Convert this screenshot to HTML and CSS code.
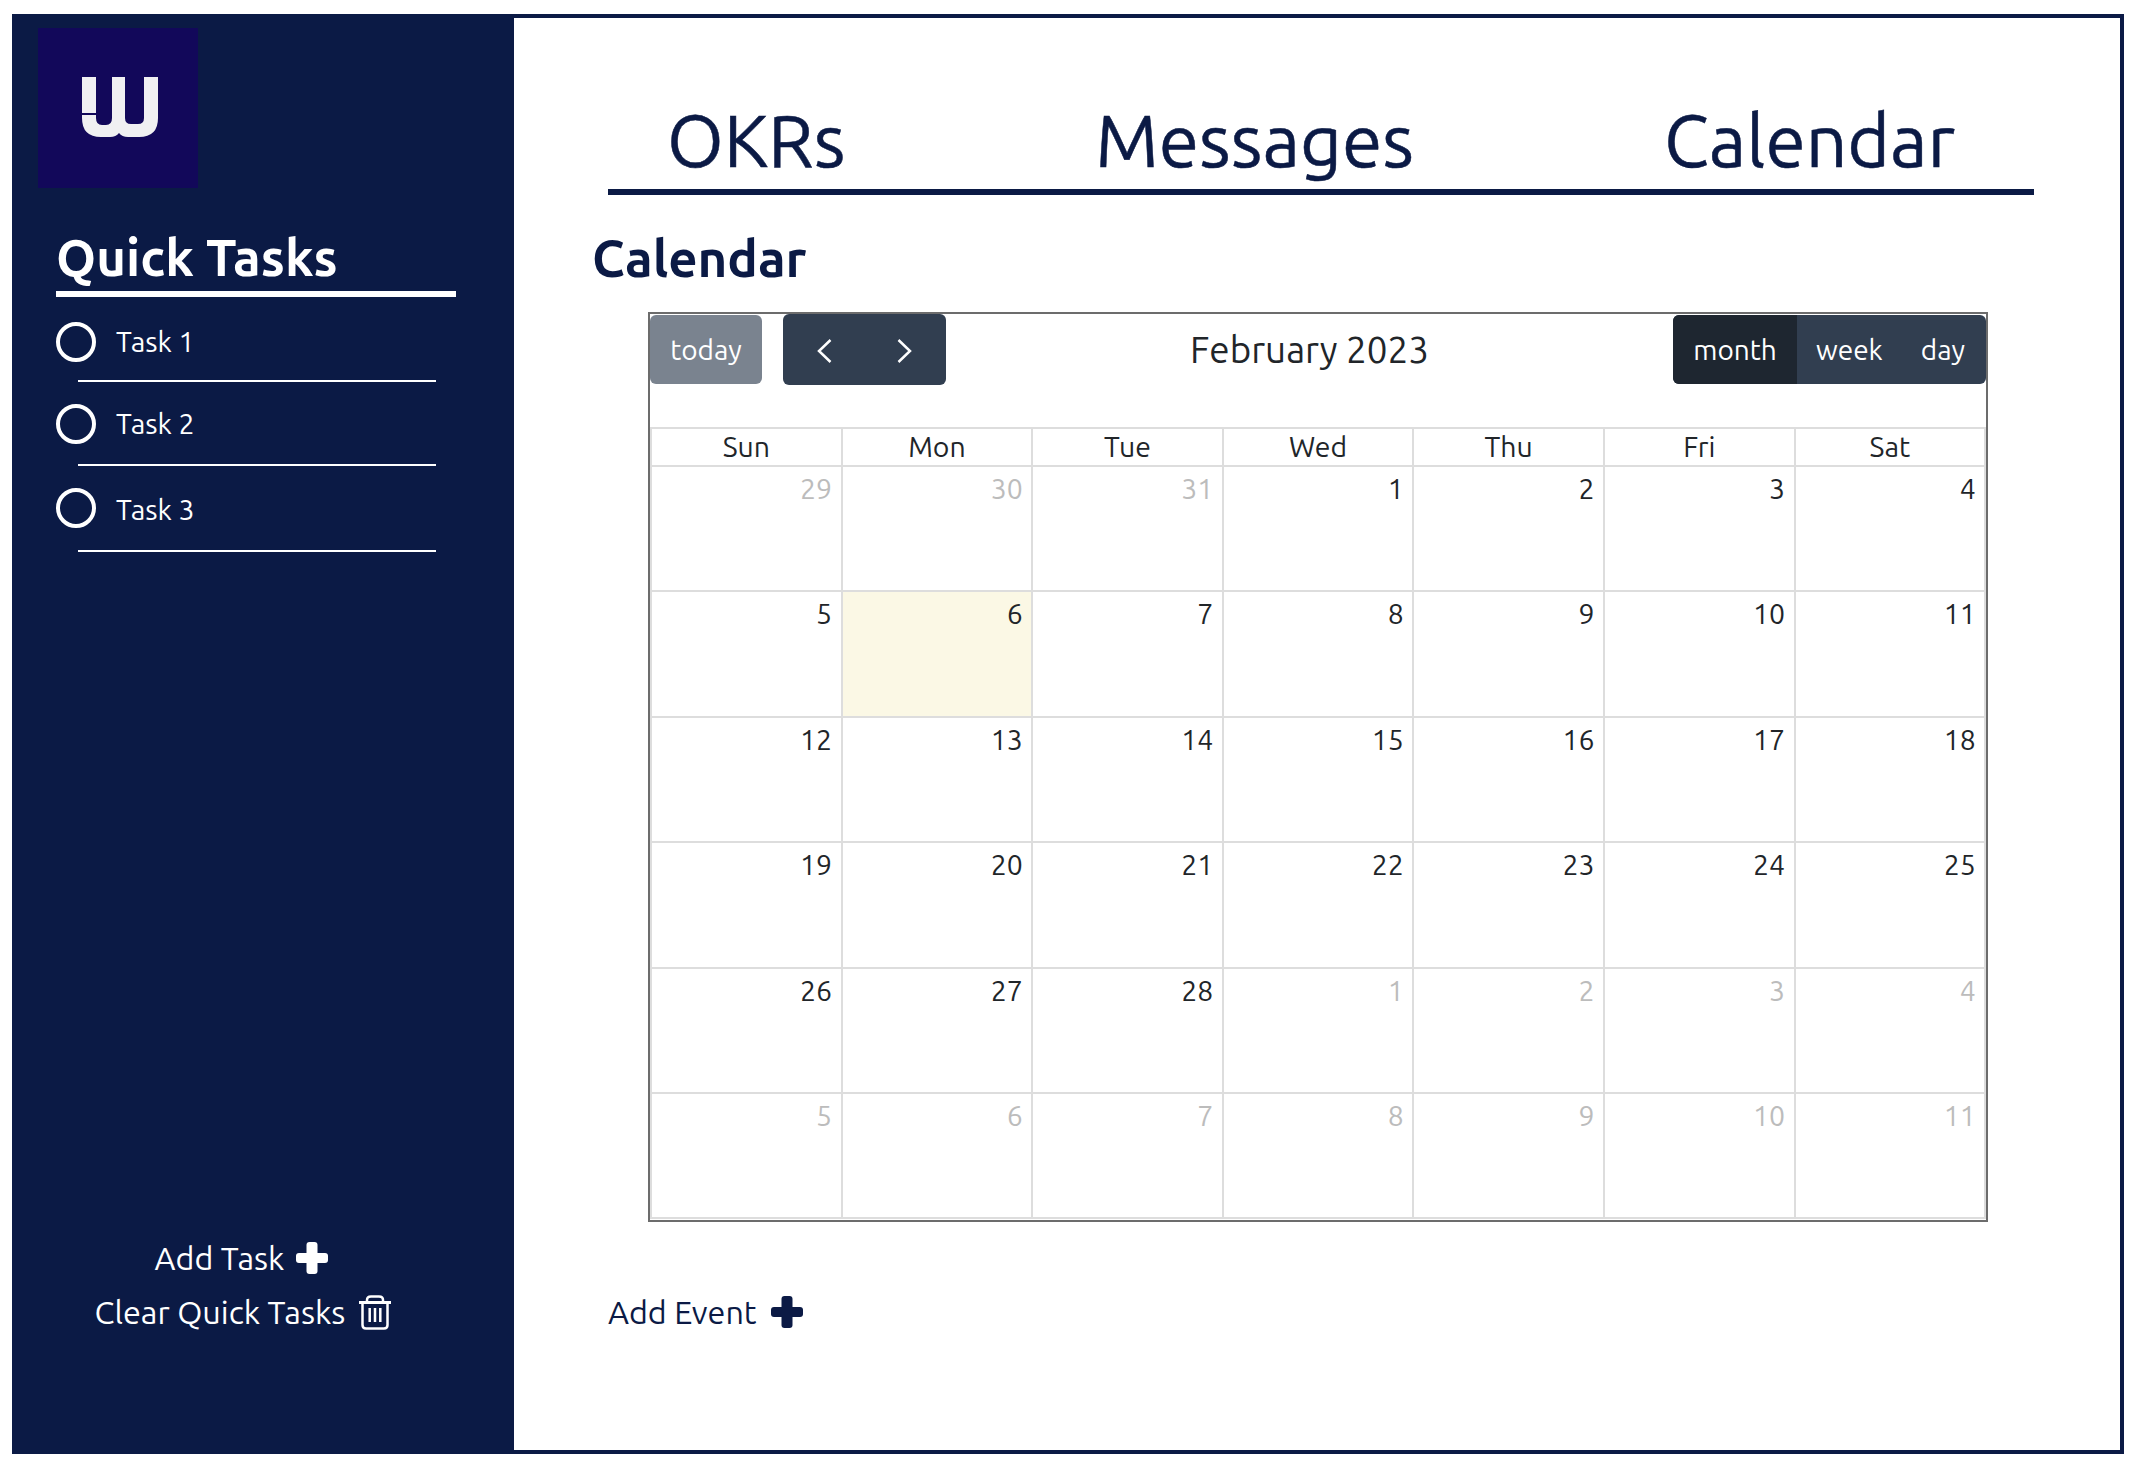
FILE: index.html
```html
<!DOCTYPE html>
<html lang="en">
<head>
    <meta charset="UTF-8">
    <title>Calendar</title>
    <link rel="stylesheet" href="styles.css">
</head>
<body>
<div class="frame">
    <aside class="sidebar">
        <div class="logo">
            <svg width="76" height="62" viewBox="0 0 76 62" fill="#f0f0f2">
                <path d="M0 1H14V37H0Z"/>
                <path d="M0 39H14V42Q14 49 20 49H24Q30 49 30 42V1H43V42Q43 48 49 48H56Q62 48 62 42V1H76V42Q76 61 57 61H46Q40 61 37 57Q34 61 28 61H19Q0 61 0 42Z"/>
            </svg>
        </div>
        <h2 class="quick-title">Quick Tasks</h2>
        <ul class="task-list">
            <li class="task">
                <div class="task-row"><span class="task-circle"></span><span class="task-name">Task 1</span></div>
                <div class="task-line"></div>
            </li>
            <li class="task">
                <div class="task-row"><span class="task-circle"></span><span class="task-name">Task 2</span></div>
                <div class="task-line"></div>
            </li>
            <li class="task">
                <div class="task-row"><span class="task-circle"></span><span class="task-name">Task 3</span></div>
                <div class="task-line"></div>
            </li>
        </ul>
        <div class="side-actions">
            <a class="action add-task">Add Task
                <svg class="plus" viewBox="0 0 32 32" fill="currentColor"><rect x="10.500" width="11" height="32" rx="3"/><rect y="11" width="32" height="10" rx="3"/></svg>
            </a>
            <a class="action clear-tasks">Clear Quick Tasks
                <svg class="trash" viewBox="0 0 32 35" fill="none" stroke="currentColor" stroke-width="2.500">
                    <path d="M8 7V5Q8 1.500 12 1.500H20Q24 1.500 24 5V7"/>
                    <path d="M0 7.500H32" stroke-width="3"/>
                    <path d="M3.500 8V30Q3.500 33.500 7 33.500H25Q28.500 33.500 28.500 30V8"/>
                    <path d="M10.700 13V27M16 13V27M21.300 13V27"/>
                </svg>
            </a>
        </div>
    </aside>

    <main class="content">
        <nav class="tabs">
            <a>OKRs</a>
            <a>Messages</a>
            <a>Calendar</a>
        </nav>
        <h2 class="page-title">Calendar</h2>

        <div class="calendar">
            <div class="toolbar">
                <div class="toolbar-left">
                    <button class="btn btn-today">today</button>
                    <div class="btn-group nav-group">
                        <button class="btn">
                            <svg class="chev" viewBox="0 0 15 24"><path d="M13.500 1L2 12L13.500 23" fill="none" stroke="#fff" stroke-width="2.500"/></svg>
                        </button>
                        <button class="btn">
                            <svg class="chev" viewBox="0 0 15 24"><path d="M1.500 1L13 12L1.500 23" fill="none" stroke="#fff" stroke-width="2.500"/></svg>
                        </button>
                    </div>
                </div>
                <div class="cal-title">February 2023</div>
                <div class="btn-group view-group">
                    <button class="btn active">month</button>
                    <button class="btn">week</button>
                    <button class="btn">day</button>
                </div>
            </div>

            <div class="grid head">
                <div>Sun</div><div>Mon</div><div>Tue</div><div>Wed</div><div>Thu</div><div>Fri</div><div>Sat</div>
            </div>
            <div class="grid days">
                <div class="other">29</div><div class="other">30</div><div class="other">31</div><div>1</div><div>2</div><div>3</div><div>4</div>
                <div>5</div><div class="today">6</div><div>7</div><div>8</div><div>9</div><div>10</div><div>11</div>
                <div>12</div><div>13</div><div>14</div><div>15</div><div>16</div><div>17</div><div>18</div>
                <div>19</div><div>20</div><div>21</div><div>22</div><div>23</div><div>24</div><div>25</div>
                <div>26</div><div>27</div><div>28</div><div class="other">1</div><div class="other">2</div><div class="other">3</div><div class="other">4</div>
                <div class="other">5</div><div class="other">6</div><div class="other">7</div><div class="other">8</div><div class="other">9</div><div class="other">10</div><div class="other">11</div>
            </div>
        </div>

        <a class="action add-event">Add Event
            <svg class="plus" viewBox="0 0 32 32" fill="currentColor"><rect x="10.500" width="11" height="32" rx="3"/><rect y="11" width="32" height="10" rx="3"/></svg>
        </a>
    </main>
</div>
</body>
</html>
```

FILE: styles.css
```css
* {
    box-sizing: border-box;
}
body {
    margin: 0;
    background: white;
    font-family: 'Ubuntu', 'Noto Sans', sans-serif;
    color: #0b1a45;
}
.frame {
    display: flex;
    width: 2112px;
    height: 1440px;
    margin: 14px 0 0 12px;
}

/* sidebar */
.sidebar {
    width: 502px;
    background-color: #0b1a45;
    color: white;
    display: flex;
    flex-direction: column;
    padding: 14px 58px 0 26px;
}
.logo {
    width: 160px;
    height: 160px;
    background-color: #12085a;
    padding: 48px 0 0 44px;
}
.quick-title {
    margin: 44px 0 0 18px;
    height: 65px;
    border-bottom: 6px solid white;
    font-size: 51px;
    line-height: 50px;
    font-weight: bold;
}
.task-list {
    list-style: none;
    margin: 25px 0 0 18px;
    padding: 0;
    font-size: 28.400px;
}
.task {
    margin-bottom: 22px;
}
.task-row {
    display: flex;
    align-items: center;
    gap: 20px;
    height: 40px;
}
.task-name {
    margin-bottom: 2px;
}
.task-circle {
    width: 40px;
    height: 40px;
    border: 4px solid white;
    border-radius: 50%;
}
.task-line {
    width: 358px;
    height: 2px;
    margin: 18px 0 0 22px;
    background: white;
}
.task:nth-child(2) .task-line {
    margin-top: 20px;
}
.task:nth-child(3) .task-line {
    margin-top: 22px;
}
.task:nth-child(3) .task-name {
    margin: 3px 0 0;
}
.side-actions {
    margin-top: auto;
    margin-bottom: 124px;
    display: flex;
    flex-direction: column;
    align-items: center;
    gap: 18px;
    padding-right: 8px;
}
.action {
    display: inline-flex;
    align-items: center;
    gap: 12px;
    font-size: 32.300px;
    line-height: 36px;
}
.add-task {
    margin-right: 3px;
}
.clear-tasks {
    gap: 14px;
    font-size: 32.400px;
}
.plus {
    width: 32px;
    height: 32px;
}
.trash {
    width: 32px;
    height: 35px;
}

/* main area */
.content {
    flex: 1;
    border: 4px solid #0b1a45;
    border-left: none;
    padding: 0 86px 0 79px;
}
.tabs {
    display: flex;
    gap: 250px;
    margin: 0 0 0 15px;
    padding: 78px 0 0 59px;
    height: 177px;
    border-bottom: 6px solid #0b1a45;
    font-size: 73px;
    line-height: 88px;
    -webkit-text-stroke: 0.500px #0b1a45;
}
.page-title {
    margin: 33px 0 0 -1px;
    font-size: 51px;
    line-height: 60px;
    font-weight: bold;
}
.calendar {
    width: 1340px;
    height: 910px;
    margin: 24px 0 0 55px;
    border: 2px solid #6c6c6c;
    color: #212529;
    font-size: 28.400px;
}
.toolbar {
    display: flex;
    justify-content: space-between;
    align-items: flex-start;
    height: 113px;
}
.toolbar-left {
    display: flex;
    gap: 21px;
    width: 296px;
}
.cal-title {
    font-size: 36.800px;
    line-height: 72px;
}
.btn {
    border: none;
    background-color: #313e50;
    color: white;
    font: inherit;
    font-size: 28px;
    padding: 0 20px;
    height: 69px;
    border-radius: 6px;
}
.btn-today {
    width: 112px;
    margin-top: 1px;
    background-color: #7a838f;
    padding: 0;
}
.btn-group {
    display: flex;
    background-color: #313e50;
    border-radius: 6px;
}
.btn-group .btn {
    background: none;
    border-radius: 0;
}
.nav-group {
    width: 163px;
    height: 71px;
    padding: 0 1px;
}
.nav-group .btn {
    flex: 1;
    height: 71px;
    padding: 0;
}
.chev {
    display: block;
    width: 15px;
    height: 24px;
    margin: 2px auto 0;
}
.view-group {
    width: 313px;
    margin-top: 1px;
    height: 69px;
}
.view-group .btn {
    padding: 0 19px;
}
.view-group .btn.active {
    background-color: #1e2630;
    width: 124px;
    padding: 0;
    border-radius: 6px 0 0 6px;
}
.grid {
    display: grid;
    grid-template-columns: repeat(7, 190.600px);
}
.grid > div {
    border-right: 2px solid #ddd;
    border-bottom: 2px solid #ddd;
}
.head {
    border-top: 2px solid #ddd;
    border-left: 2px solid #ddd;
    height: 40px;
    text-align: center;
    line-height: 36px;
}
.days {
    border-left: 2px solid #ddd;
    grid-auto-rows: 125.400px;
}
.days > div {
    text-align: right;
    padding: 4px 8.500px 0 0;
    line-height: 36px;
}
.days .other {
    color: #bcbcbc;
}
.days .today {
    background-color: #fbf8e5;
}
.add-event {
    margin: 72px 0 0 15px;
    gap: 14px;
    color: #0b1a45;
}
```
